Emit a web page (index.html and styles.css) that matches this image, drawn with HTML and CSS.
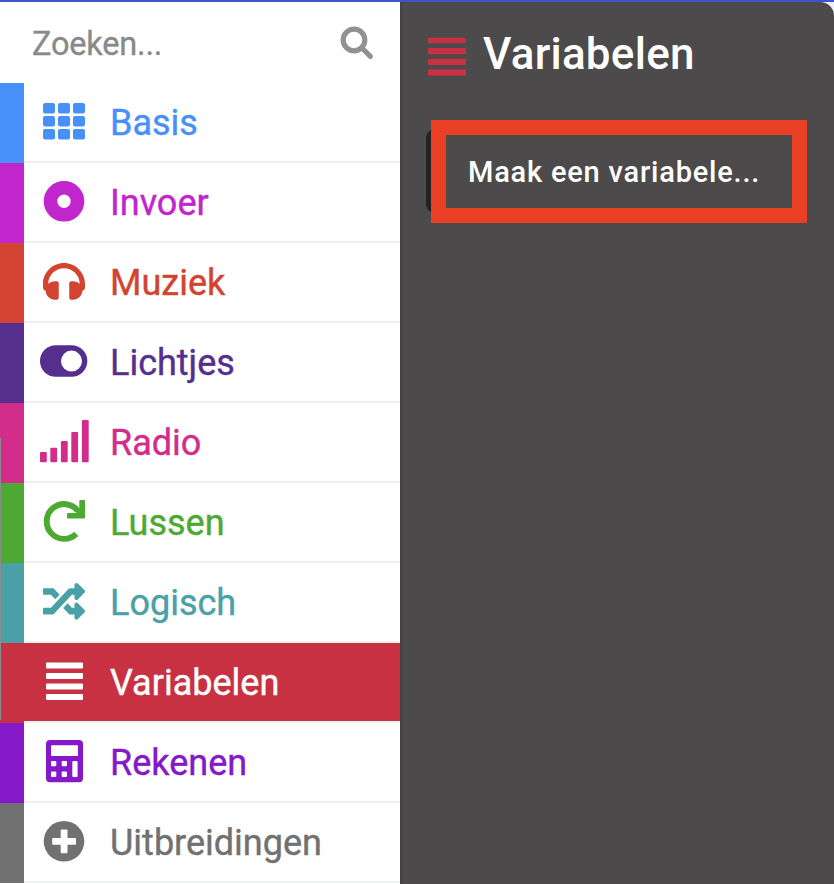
FILE: index.html
```html
<!DOCTYPE html>
<html lang="nl">
<head>
<meta charset="utf-8">
<title>Variabelen</title>
<link rel="stylesheet" href="styles.css">
</head>
<body>
<div class="app">
  <nav class="toolbox">
    <div class="search">
      <span class="search-label">Zoeken...</span>
      <svg class="search-icon" width="34" height="34" viewBox="0 0 34 34"><circle cx="14" cy="14" r="10.8"/><path d="M22 22 L30.3 30.3"/></svg>
    </div>
    <ul class="categories">
      <li class="category basis">
        <svg class="icon" viewBox="0 0 50 78"><rect x="4" y="20" width="12" height="10.5" rx="2"/><rect x="19" y="20" width="12" height="10.5" rx="2"/><rect x="34" y="20" width="12" height="10.5" rx="2"/><rect x="4" y="33" width="12" height="10.5" rx="2"/><rect x="19" y="33" width="12" height="10.5" rx="2"/><rect x="34" y="33" width="12" height="10.5" rx="2"/><rect x="4" y="46" width="12" height="10.5" rx="2"/><rect x="19" y="46" width="12" height="10.5" rx="2"/><rect x="34" y="46" width="12" height="10.5" rx="2"/></svg>
        <span class="name">Basis</span>
      </li>
      <li class="category invoer">
        <svg class="icon" viewBox="0 0 50 78"><circle class="ring" cx="25" cy="38.3" r="13.5"/></svg>
        <span class="name">Invoer</span>
      </li>
      <li class="category muziek">
        <svg class="icon" viewBox="0 0 50 78"><path transform="translate(4 17.3) scale(.082)" d="M256 32C114.52 32 0 146.497 0 288v48a32 32 0 0 0 17.689 28.622l14.383 7.191C34.083 431.903 83.421 480 144 480h24c13.255 0 24-10.745 24-24V280c0-13.255-10.745-24-24-24h-24c-31.342 0-59.671 12.879-80 33.627V288c0-105.869 86.131-192 192-192s192 86.131 192 192v1.627C427.671 268.879 399.342 256 368 256h-24c-13.255 0-24 10.745-24 24v176c0 13.255 10.745 24 24 24h24c60.579 0 109.917-48.098 111.928-108.187l14.382-7.191A32 32 0 0 0 512 336v-48c0-141.479-114.496-256-256-256z"/></svg>
        <span class="name">Muziek</span>
      </li>
      <li class="category lichtjes">
        <svg class="icon" viewBox="0 0 50 78"><rect x="1" y="22.2" width="47.3" height="31.6" rx="15.8"/><circle class="hole" cx="32.5" cy="38.1" r="10.5"/></svg>
        <span class="name">Lichtjes</span>
      </li>
      <li class="category radio">
        <svg class="icon" viewBox="0 0 50 78"><rect x="1" y="49" width="6.8" height="10.3" rx="1"/><rect x="11.3" y="44.8" width="6.8" height="14.5" rx="1"/><rect x="21.9" y="38" width="6.8" height="21.3" rx="1"/><rect x="32.3" y="29" width="6.8" height="30.3" rx="1"/><rect x="42.9" y="17" width="6.8" height="42.3" rx="1"/></svg>
        <span class="name">Radio</span>
      </li>
      <li class="category lussen">
        <svg class="icon" viewBox="0 0 50 78"><path class="arc" d="M39 28A17.4 17.4 0 1 0 37.3 50.9"/><path d="M41.3 17H45a1 1 0 0 1 1 1V34.6a1 1 0 0 1-1 1H29a1 1 0 0 1-1-1V30.9a1 1 0 0 1 1-1L37.5 30L38 26L40.3 26V18a1 1 0 0 1 1-1z"/></svg>
        <span class="name">Lussen</span>
      </li>
      <li class="category logisch">
        <svg class="icon" viewBox="0 0 50 78"><path transform="translate(4 17.3) scale(.082)" d="M504.971 359.029c9.373 9.373 9.373 24.569 0 33.941l-80 79.984c-15.01 15.01-40.971 4.49-40.971-16.971V416h-58.785a12.004 12.004 0 0 1-8.773-3.812l-70.556-75.596 53.333-57.143L352 336h32v-39.981c0-21.438 25.943-31.998 40.971-16.971l80 79.981zM12 176h84l52.781 56.551 53.333-57.143-70.556-75.596A11.999 11.999 0 0 0 122.785 96H12c-6.627 0-12 5.373-12 12v56c0 6.627 5.373 12 12 12zm372 0v39.984c0 21.46 25.961 31.98 40.971 16.971l80-79.984c9.373-9.373 9.373-24.569 0-33.941l-80-79.981C409.943 24.021 384 34.582 384 56.019V96h-58.785a12.004 12.004 0 0 0-8.773 3.812L96 336H12c-6.627 0-12 5.373-12 12v56c0 6.627 5.373 12 12 12h110.785c3.326 0 6.503-1.381 8.773-3.812L352 176h32z"/></svg>
        <span class="name">Logisch</span>
      </li>
      <li class="category variabelen">
        <svg class="icon" viewBox="0 0 50 78"><rect x="7" y="19.4" width="37" height="6" rx="1"/><rect x="7" y="29.9" width="37" height="6" rx="1"/><rect x="7" y="40.4" width="37" height="6" rx="1"/><rect x="7" y="51" width="37" height="6" rx="1"/></svg>
        <span class="name">Variabelen</span>
      </li>
      <li class="category rekenen">
        <svg class="icon" viewBox="0 0 50 78"><rect x="7" y="17" width="37" height="42.2" rx="4"/><g class="hole"><rect x="12" y="22.3" width="27" height="10.7" rx="1"/><rect x="12" y="38" width="5.3" height="5.3" rx="1"/><rect x="22.7" y="38" width="5.3" height="5.3" rx="1"/><rect x="12" y="48.6" width="5.3" height="5.3" rx="1"/><rect x="22.7" y="48.6" width="5.3" height="5.3" rx="1"/><rect x="33.3" y="38" width="5.3" height="15.9" rx="1"/></g></svg>
        <span class="name">Rekenen</span>
      </li>
      <li class="category uitbreidingen">
        <svg class="icon" viewBox="0 0 50 78"><circle cx="25" cy="38.3" r="20.3"/><g class="hole"><rect x="13.2" y="34.9" width="23.8" height="6.8" rx="1"/><rect x="21.7" y="26.4" width="6.8" height="23.8" rx="1"/></g></svg>
        <span class="name">Uitbreidingen</span>
      </li>
    </ul>
    <div class="scrollbar"></div>
  </nav>
  <main class="flyout">
    <header class="flyout-header">
      <svg class="flyout-icon" width="38" height="39" viewBox="0 0 38 39"><rect x="0" y=".7" width="37.7" height="5.6" rx="1"/><rect x="0" y="11" width="38" height="6.2" rx="1"/><rect x="0" y="21.8" width="38" height="6.2" rx="1"/><rect x="0" y="32.3" width="38" height="6.5" rx="1"/></svg>
      <h1 class="flyout-title">Variabelen</h1>
    </header>
    <div class="button-area">
      <div class="highlight"><span class="button-label">Maak een variabele...</span></div>
    </div>
  </main>
</div>
</body>
</html>
```
FILE: styles.css
```css
* { box-sizing: border-box; }
body { margin: 0; background: #fff; font-family: Roboto, "Liberation Sans", sans-serif; }
.app {
  display: grid;
  grid-template-columns: 400px 434px;
  height: 884px;
  border-top: 2px solid #3c55cc;
  overflow: hidden;
  background: #eceff8;
}
.toolbox { position: relative; background: #fff; }
.search {
  display: flex;
  justify-content: space-between;
  align-items: center;
  height: 81px;
  padding: 0 26px 0 32px;
}
.search-label {
  padding-top: 2px;
  color: #898989;
  font-size: 32.5px;
  line-height: 40px;
  letter-spacing: -.2px;
  -webkit-text-stroke: .3px currentColor;
}
.search-icon { fill: none; stroke: #919191; stroke-width: 5.2; stroke-linecap: round; }
.categories { list-style: none; margin: 0; padding: 0; }
.category {
  display: flex;
  height: 80px;
  color: var(--tone);
  background: linear-gradient(#ecf0f1, #ecf0f1) 24px 78px / 376px 2px no-repeat;
  border-left: 24px solid var(--tone);
  background-origin: border-box;
}
.icon { flex: none; width: 50px; height: 78px; margin-left: 15px; fill: currentColor; }
.hole { fill: #fff; }
.ring { fill: none; stroke: currentColor; stroke-width: 13.6; }
.arc { fill: none; stroke: currentColor; stroke-width: 5.9; }
.name {
  margin-left: 21px;
  font-size: 36px;
  line-height: 81px;
  -webkit-text-stroke: .4px currentColor;
}
.basis { --tone: #4790f7; }
.invoer { --tone: #c026cc; }
.muziek { --tone: #d24431; }
.lichtjes { --tone: #562f8e; }
.radio { --tone: #d22d8b; }
.lussen { --tone: #4ca931; }
.logisch { --tone: #49a1a7; }
.variabelen { --tone: #c83142; }
.variabelen .icon, .variabelen .name { color: #fff; }
.variabelen {
  background: linear-gradient(#c83142 78px, #ecf0f1 78px);
}
.rekenen { --tone: #8518c9; }
.uitbreidingen { --tone: #717171; }
.scrollbar { position: absolute; left: 0; top: 436px; width: 1px; height: 282px; background: #8c8c8c; }
.flyout {
  background: linear-gradient(90deg, #424040, #4c4a4a 4px);
  border-top-right-radius: 14px;
  padding: 35px 27px 0 28px;
}
.flyout-header { display: flex; height: 83px; }
.flyout-title {
  margin: -9px 0 0 17px;
  color: #fff;
  font-size: 44px;
  font-weight: 500;
  line-height: 52px;
  letter-spacing: .25px;
}
.flyout-icon { flex: none; fill: #c83142; }
.button-area {
  margin-left: -2px;
  padding-left: 5px;
  background: radial-gradient(circle at 10px 10px, #242323 10px, transparent 10.5px) 0 9px / 10px 10px no-repeat,
    radial-gradient(circle at 10px 0, #242323 10px, transparent 10.5px) 0 83px / 10px 10px no-repeat,
    linear-gradient(#242323, #242323) 0 19px / 10px 64px no-repeat;
}
.highlight {
  display: flex;
  align-items: center;
  width: 376px;
  height: 103px;
  padding-left: 22px;
  background: #4c4a4a;
  border: 15px solid #e94025;
}
.button-label { color: #fff; font-size: 29px; font-weight: 500; letter-spacing: .8px; white-space: nowrap; }
```
